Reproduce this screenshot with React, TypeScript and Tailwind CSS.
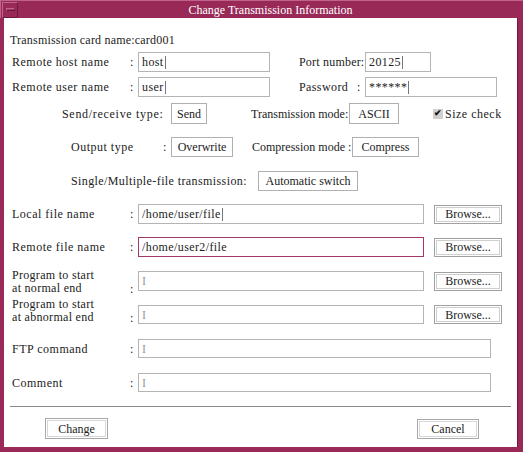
import React from 'react';

const font = { fontFamily: '"Liberation Serif", "Noto Sans CJK JP", serif' };

function Caret() {
  return <span className="ml-[1px] inline-block h-[13px] w-[1px] bg-[#777]" />;
}

function Field({ value, width, focused, empty }: { value?: string; width: string; focused?: boolean; empty?: boolean }) {
  return (
    <div
      className={`${width} flex h-full items-center border bg-white pl-[3px] text-[12px] tracking-[0.4px] text-[#222] ${
        focused ? 'border-[#a2386a]' : 'border-[#b4b4b4]'
      }`}
    >
      {empty ? <span className="text-[12px] leading-none text-[#999]">I</span> : (
        <>
          <span>{value}</span>
          {!focused && <Caret />}
        </>
      )}
    </div>
  );
}

function Btn({ label, width }: { label: string; width: string }) {
  return (
    <div className={`${width} flex h-full items-center justify-center border border-[#b0b0b0] bg-white text-[12px] text-[#222]`}>
      {label}
    </div>
  );
}

function Browse() {
  return (
    <div className="ml-[10px] flex h-[19px] w-[68px] items-center justify-center border border-[#a0a0a0] bg-white p-[1px]">
      <div className="flex h-full w-full items-center justify-center border border-[#cfcfcf] text-[12px] text-[#222]">
        Browse...
      </div>
    </div>
  );
}

function Label({ children }: { children: React.ReactNode }) {
  return <div className="w-[118px] shrink-0 whitespace-nowrap text-[12px] tracking-[0.5px] text-[#222]">{children}</div>;
}

function Colon() {
  return <div className="w-[8px] shrink-0 text-[12px] text-[#222]">:</div>;
}

export default function App() {
  return (
    <div className="h-[452px] w-[523px] bg-[#992a58] leading-none" style={font}>
      {/* title bar */}
      <div className="flex h-[18px] items-center border-t border-l border-[#c0628c]">
        <div className="ml-[1px] flex h-[16px] w-[16px] items-center justify-center border border-[#c0628c] border-r-[#6e1a3e] border-b-[#6e1a3e]">
          <div className="h-[3px] w-[9px] border border-[#c0628c] border-b-[#6e1a3e] border-r-[#6e1a3e] bg-[#a83a66]" />
        </div>
        <div className="flex-1 text-center text-[12px] text-white">Change Transmission Information</div>
      </div>

      <div className="ml-[4px] h-[429px] w-[514px] border-r border-[#6e1a3e] bg-white text-[12px] text-[#222]">
        <div className="box-content flex h-[14px] items-center pl-[6px] pt-[15px] tracking-[0.2px]">
          Transmission card name:card001
        </div>

        <div className="mt-[5px] flex h-[20px] items-center pl-[8px]">
          <Label>Remote host name</Label>
          <Colon />
          <Field value="host" width="w-[132px]" />
          <div className="ml-[29px] w-[66px] whitespace-nowrap tracking-[0.2px]">Port number:</div>
          <Field value="20125" width="w-[66px]" />
        </div>

        <div className="mt-[5px] flex h-[20px] items-center pl-[8px]">
          <Label>Remote user name</Label>
          <Colon />
          <Field value="user" width="w-[132px]" />
          <div className="ml-[29px] w-[58px] whitespace-nowrap tracking-[0.4px]">Password</div>
          <Colon />
          <Field value="******" width="w-[132px]" />
        </div>

        <div className="mt-[6px] flex h-[21px] items-center pl-[58px]">
          <div className="w-[109px] whitespace-nowrap tracking-[0.7px]">Send/receive type:</div>
          <Btn label="Send" width="w-[36px]" />
          <div className="ml-[44px] w-[98px] whitespace-nowrap">Transmission mode:</div>
          <Btn label="ASCII" width="w-[50px]" />
          <div className="ml-[34px] flex items-center">
            <span className="flex h-[10px] w-[10px] items-center justify-center bg-[#d0d0d0] text-[9px] font-bold text-[#111]">✔</span>
            <span className="ml-[2px] whitespace-nowrap tracking-[0.5px]">Size check</span>
          </div>
        </div>

        <div className="mt-[13px] flex h-[20px] items-center pl-[67px]">
          <div className="w-[92px] whitespace-nowrap tracking-[0.5px]">Output type</div>
          <Colon />
          <Btn label="Overwrite" width="w-[62px]" />
          <div className="ml-[19px] w-[100px] whitespace-nowrap">Compression mode :</div>
          <Btn label="Compress" width="w-[67px]" />
        </div>

        <div className="mt-[14px] flex h-[20px] items-center pl-[67px]">
          <div className="w-[187px] whitespace-nowrap tracking-[0.4px]">Single/Multiple-file transmission:</div>
          <Btn label="Automatic switch" width="w-[100px]" />
        </div>

        <div className="mt-[13px] flex h-[20px] items-center pl-[8px]">
          <Label>Local file name</Label>
          <Colon />
          <Field value="/home/user/file" width="w-[286px]" />
          <Browse />
        </div>

        <div className="mt-[13px] flex h-[20px] items-center pl-[8px]">
          <Label>Remote file name</Label>
          <Colon />
          <Field value="/home/user2/file" width="w-[286px]" focused />
          <Browse />
        </div>

        <div className="mt-[12px] flex h-[26px] items-start pl-[8px]">
          <div className="flex w-[126px] items-end">
            <div className="w-[118px] leading-[13px] tracking-[0.3px]">Program to start<br />at normal end</div>
            <Colon />
          </div>
          <div className="mt-[2px] flex h-[20px] items-center">
            <Field width="w-[286px]" empty />
            <Browse />
          </div>
        </div>

        <div className="mt-[3px] flex h-[27px] items-start pl-[8px]">
          <div className="flex w-[126px] items-end">
            <div className="w-[118px] leading-[13px] tracking-[0.3px]">Program to start<br />at abnormal end</div>
            <Colon />
          </div>
          <div className="mt-[7px] flex h-[19px] items-center">
            <Field width="w-[286px]" empty />
            <Browse />
          </div>
        </div>

        <div className="mt-[14px] flex h-[19px] items-center pl-[8px]">
          <Label>FTP command</Label>
          <Colon />
          <Field width="w-[353px]" empty />
        </div>

        <div className="mt-[15px] flex h-[19px] items-center pl-[8px]">
          <Label>Comment</Label>
          <Colon />
          <Field width="w-[353px]" empty />
        </div>

        <div className="mx-[6px] mt-[14px] h-[2px] border-t border-b border-t-[#8a8a8a] border-b-white" />

        <div className="mt-[10px] flex h-[21px] items-center justify-between pl-[41px] pr-[38px]">
          <div className="flex h-[21px] w-[63px] items-center justify-center border border-[#a8a8a8] p-[1px]">
            <div className="flex h-full w-full items-center justify-center border border-[#d8d8d8]">Change</div>
          </div>
          <div className="flex h-[20px] w-[62px] items-center justify-center border border-[#a8a8a8] p-[1px]">
            <div className="flex h-full w-full items-center justify-center border border-[#d8d8d8]">Cancel</div>
          </div>
        </div>
      </div>
    </div>
  );
}
